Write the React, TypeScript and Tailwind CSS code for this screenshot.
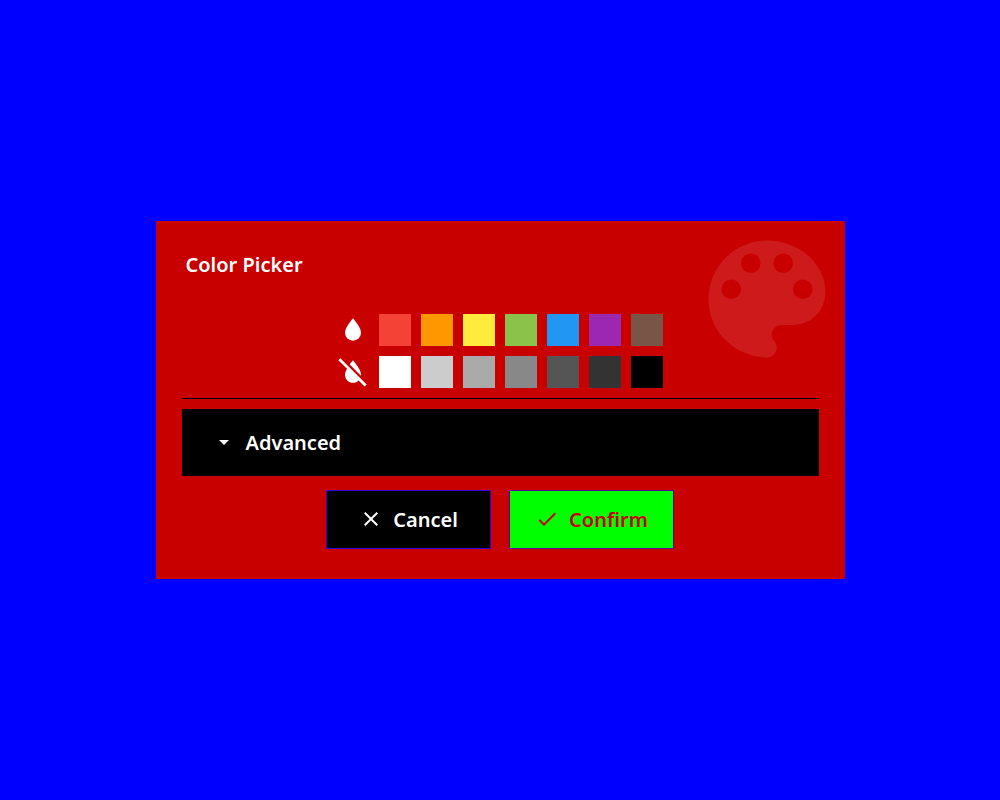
import { useState } from "react";

const vivid = [
  { name: "Red", fill: "bg-[#f44336]" },
  { name: "Orange", fill: "bg-[#ff9800]" },
  { name: "Yellow", fill: "bg-[#ffeb3b]" },
  { name: "Green", fill: "bg-[#8bc34a]" },
  { name: "Blue", fill: "bg-[#2196f3]" },
  { name: "Purple", fill: "bg-[#9c27b0]" },
  { name: "Brown", fill: "bg-[#795548]" },
];

const neutral = [
  { name: "White", fill: "bg-white" },
  { name: "Light grey", fill: "bg-[#cccccc]" },
  { name: "Silver", fill: "bg-[#aaaaaa]" },
  { name: "Grey", fill: "bg-[#888888]" },
  { name: "Dark grey", fill: "bg-[#555555]" },
  { name: "Charcoal", fill: "bg-[#333333]" },
  { name: "Black", fill: "bg-black" },
];

const WATER =
  "M12,20A6,6 0 0,1 6,14C6,10 12,3.25 12,3.25C12,3.25 18,10 18,14A6,6 0 0,1 12,20Z";
const WATER_OFF =
  "M20.65 22.92L16.29 18.38C15.2 19.4 13.69 20.1 12 20.1C8.69 20.1 6 17.31 6 14C6 12.67 6.67 11.03 7.55 9.64L1.01 3.1L2.49 1.63L22.21 21.36L20.65 22.92M18 14C18 10 12 3.25 12 3.25S10.84 4.55 9.55 6.35L17.95 14.75C18 14.5 18 14.25 18 14Z";
const MENU_DOWN = "M7,10L12,15L17,10H7Z";
const CLOSE =
  "M19,6.41L17.59,5L12,10.59L6.41,5L5,6.41L10.59,12L5,17.59L6.41,19L12,13.41L17.59,19L19,17.59L13.41,12L19,6.41Z";
const CHECK =
  "M21,7L9,19L3.5,13.5L4.91,12.09L9,16.17L19.59,5.59L21,7Z";
const PALETTE =
  "M17.5,12A1.5,1.5 0 0,1 16,10.5A1.5,1.5 0 0,1 17.5,9A1.5,1.5 0 0,1 19,10.5A1.5,1.5 0 0,1 17.5,12M14.5,8A1.5,1.5 0 0,1 13,6.5A1.5,1.5 0 0,1 14.5,5A1.5,1.5 0 0,1 16,6.5A1.5,1.5 0 0,1 14.5,8M9.5,8A1.5,1.5 0 0,1 8,6.5A1.5,1.5 0 0,1 9.5,5A1.5,1.5 0 0,1 11,6.5A1.5,1.5 0 0,1 9.5,8M6.5,12A1.5,1.5 0 0,1 5,10.5A1.5,1.5 0 0,1 6.5,9A1.5,1.5 0 0,1 8,10.5A1.5,1.5 0 0,1 6.5,12M12,3A9,9 0 0,0 3,12A9,9 0 0,0 12,21A1.5,1.5 0 0,0 13.5,19.5C13.5,19.11 13.35,18.76 13.11,18.5C12.88,18.23 12.73,17.88 12.73,17.5A1.5,1.5 0 0,1 14.23,16H16A5,5 0 0,0 21,11C21,6.58 16.97,3 12,3Z";

function Icon({ path, className }: { path: string; className: string }) {
  return (
    <svg viewBox="0 0 24 24" fill="currentColor" aria-hidden="true" className={className}>
      <path d={path} />
    </svg>
  );
}

function ButtonIcon({ path }: { path: string }) {
  return <Icon path={path} className="mb-px size-6 shrink-0" />;
}

function SwatchRow({
  icon,
  label,
  colors,
  selected,
  onSelect,
}: {
  icon: string;
  label: string;
  colors: { name: string; fill: string }[];
  selected: string;
  onSelect: (name: string) => void;
}) {
  return (
    <div role="group" aria-label={label} className="flex justify-center gap-2.5">
      <Icon path={icon} className="size-8 shrink-0" />
      {colors.map((color) => (
        <button
          key={color.name}
          type="button"
          aria-label={color.name}
          aria-pressed={selected === color.name}
          onClick={() => onSelect(color.name)}
          className={`size-8 shrink-0 cursor-pointer ${color.fill}`}
        />
      ))}
    </div>
  );
}

export default function App() {
  const [selected, setSelected] = useState("");
  const [open, setOpen] = useState(false);

  return (
    <main className="flex min-h-screen items-center justify-center bg-[#0000ff] font-['Noto_Sans',sans-serif] text-xl font-semibold text-white">
      <section
        role="dialog"
        aria-labelledby="title"
        className="relative w-full max-w-[689px] bg-[#c80000] px-[26px] py-[30px]"
      >
        <Icon
          path={PALETTE}
          className="pointer-events-none absolute top-0 right-0 size-[156px] text-white/10"
        />
        <h1 id="title" className="px-1 leading-7">
          Color Picker
        </h1>
        <div className="mt-[35px] flex flex-col gap-2.5 border-b border-black pb-2.5">
          <SwatchRow icon={WATER} label="Colors" colors={vivid} selected={selected} onSelect={setSelected} />
          <SwatchRow icon={WATER_OFF} label="Neutrals" colors={neutral} selected={selected} onSelect={setSelected} />
        </div>
        <button
          type="button"
          aria-expanded={open}
          onClick={() => setOpen(!open)}
          className="mt-2.5 flex w-full cursor-pointer items-center gap-2.5 bg-black px-[30px] py-5 leading-[27px]"
        >
          <ButtonIcon path={MENU_DOWN} />
          Advanced
        </button>
        <div className="mt-3.5 flex justify-center gap-[18px]">
          <button
            type="button"
            className="flex w-[165px] cursor-pointer items-center justify-center gap-2.5 border border-[#3200e1] bg-black py-[15px] leading-[27px]"
          >
            <ButtonIcon path={CLOSE} />
            Cancel
          </button>
          <button
            type="button"
            className="flex w-[165px] cursor-pointer items-center justify-center gap-2.5 border border-[#5a00a5] bg-[#00ff00] py-[15px] leading-[27px] text-[#c80000]"
          >
            <ButtonIcon path={CHECK} />
            Confirm
          </button>
        </div>
      </section>
    </main>
  );
}
